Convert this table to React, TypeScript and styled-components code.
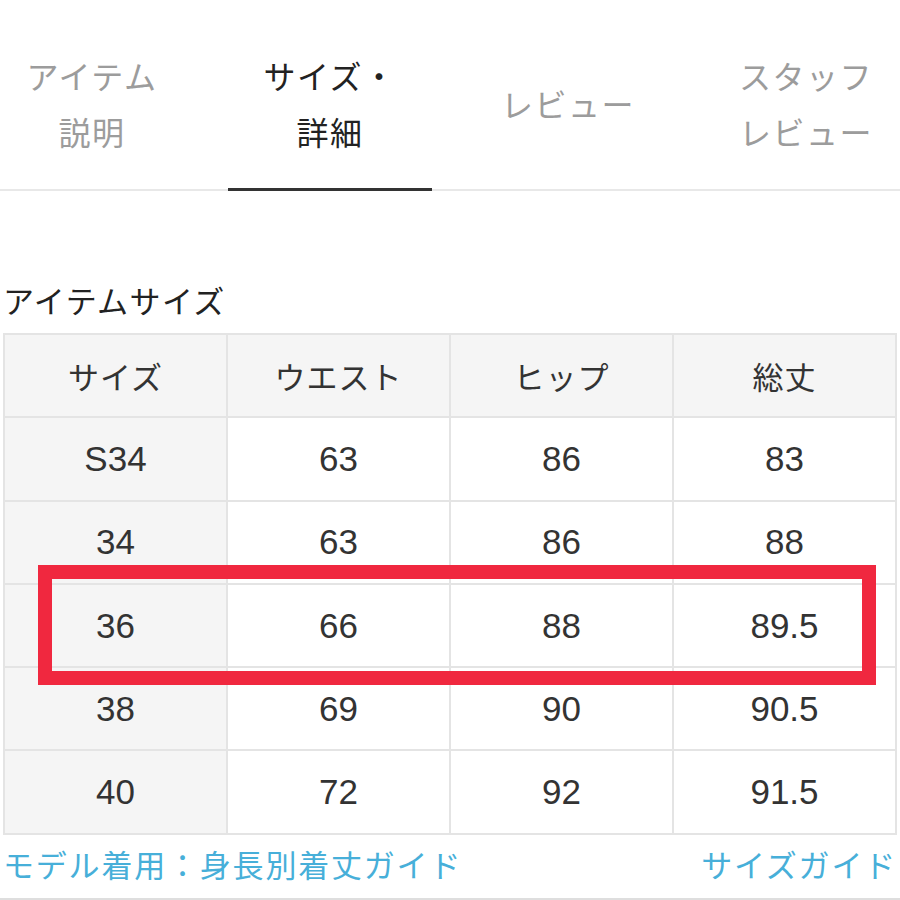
import React from "react";
import styled, { createGlobalStyle } from "styled-components";

const GlobalStyle = createGlobalStyle`
  html, body { margin: 0; padding: 0; background: #fff; }
  body {
    font-family: "Liberation Sans", "Noto Sans CJK JP", sans-serif;
    color: #222;
    overflow: hidden;
  }
`;

const Page = styled.div`
  width: 900px;
  height: 900px;
  box-sizing: border-box;
  display: flex;
  flex-direction: column;
  overflow: hidden;
`;

const TabBar = styled.div`
  display: flex;
  padding-top: 50px;
  border-bottom: 2px solid #e8e8e8;
  margin-left: -27px;
`;

const Tab = styled.div`
  width: 238px;
  flex: none;
  display: flex;
  flex-direction: column;
  align-items: center;
`;

const TabLabel = styled.div<{ $active?: boolean }>`
  width: 204px;
  height: 112px;
  padding-bottom: 26px;
  display: flex;
  align-items: center;
  justify-content: center;
  text-align: center;
  font-size: 32px;
  letter-spacing: 1.5px;
  line-height: 56px;
  color: ${(p) => (p.$active ? "#222" : "#9c9c9c")};
  border-bottom: 3px solid ${(p) => (p.$active ? "#333" : "transparent")};
  margin-bottom: -2px;
`;

const Section = styled.div`
  padding: 0 3px;
  display: flex;
  flex-direction: column;
`;

const SectionTitle = styled.div`
  margin-top: 92px;
  font-size: 31px;
  letter-spacing: 1.4px;
  line-height: 40px;
  color: #222;
  height: 40px;
  margin-bottom: 10px;
`;

const TableWrap = styled.div`
  position: relative;
`;

const Grid = styled.div`
  display: grid;
  grid-template-columns: repeat(4, 1fr);
  grid-auto-rows: 81.3px;
  gap: 2px;
  padding: 2px;
  background: #e4e4e4;
`;

const Cell = styled.div<{ $shade?: boolean; $head?: boolean }>`
  display: flex;
  align-items: center;
  justify-content: center;
  background: ${(p) => (p.$shade ? "#f5f5f5" : "#fff")};
  font-size: ${(p) => (p.$head ? "31px" : "35px")};
  letter-spacing: ${(p) => (p.$head ? "1px" : "0")};
  color: #333;
`;

const Highlight = styled.div`
  position: absolute;
  left: 35px;
  top: 232px;
  width: 838px;
  height: 120px;
  box-sizing: border-box;
  border: 14px solid #f0283f;
  pointer-events: none;
`;

const LinkRow = styled.div`
  display: flex;
  justify-content: space-between;
  align-items: center;
  height: 40px;
  margin-top: 9px;
  font-size: 31px;
  letter-spacing: 1.8px;
  color: #47afd9;
`;

const BottomLine = styled.div`
  margin-top: auto;
  height: 2px;
  background: #dedede;
`;

const headers = ["サイズ", "ウエスト", "ヒップ", "総丈"];
const rows = [
  ["S34", "63", "86", "83"],
  ["34", "63", "86", "88"],
  ["36", "66", "88", "89.5"],
  ["38", "69", "90", "90.5"],
  ["40", "72", "92", "91.5"],
];

export default function App() {
  return (
    <Page>
      <GlobalStyle />
      <TabBar>
        <Tab>
          <TabLabel>アイテム<br />説明</TabLabel>
        </Tab>
        <Tab>
          <TabLabel $active>サイズ・<br />詳細</TabLabel>
        </Tab>
        <Tab>
          <TabLabel>レビュー</TabLabel>
        </Tab>
        <Tab>
          <TabLabel>スタッフ<br />レビュー</TabLabel>
        </Tab>
      </TabBar>
      <Section>
        <SectionTitle>アイテムサイズ</SectionTitle>
        <TableWrap>
          <Grid>
            {headers.map((h) => (
              <Cell key={h} $shade $head>
                {h}
              </Cell>
            ))}
            {rows.map((r) =>
              r.map((v, i) => (
                <Cell key={r[0] + i} $shade={i === 0}>
                  {v}
                </Cell>
              ))
            )}
          </Grid>
          <Highlight />
        </TableWrap>
        <LinkRow>
          <span>モデル着用：身長別着丈ガイド</span>
          <span>サイズガイド</span>
        </LinkRow>
      </Section>
      <BottomLine />
    </Page>
  );
}
